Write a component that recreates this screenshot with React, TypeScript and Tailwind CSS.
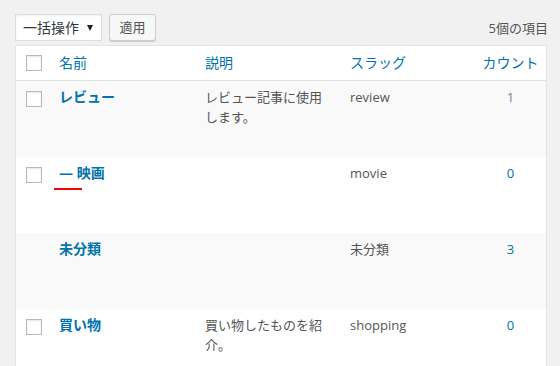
import React from "react";

// --- Types ---
interface Term {
  id: string;
  name: string;
  child?: boolean;
  description: string;
  slug: string;
  count: number;
  checkbox: boolean;
  countColor: string;
}

const terms: Term[] = [
  { id: "1", name: "レビュー", description: "レビュー記事に使用します。", slug: "review", count: 1, checkbox: true, countColor: "text-[#6f79a8]" },
  { id: "2", name: "映画", child: true, description: "", slug: "movie", count: 0, checkbox: true, countColor: "text-[#0073aa]" },
  { id: "3", name: "未分類", description: "", slug: "未分類", count: 3, checkbox: false, countColor: "text-[#0073aa]" },
  { id: "4", name: "買い物", description: "買い物したものを紹介。", slug: "shopping", count: 0, checkbox: true, countColor: "text-[#0073aa]" },
];

const cols = "grid grid-cols-[33px_146px_145px_135px_71px]";

const Checkbox = () => (
  <span className="block h-4 w-4 border border-[#b4b9be] bg-white shadow-[inset_0_1px_2px_rgba(0,0,0,0.1)]" />
);

const TermRow = ({ term, index }: { term: Term; index: number }) => (
  <div className={`${cols} h-[76px] ${index % 2 === 0 ? "bg-[#f9f9f9]" : "bg-white"}`}>
    <div className="pl-[10px] pt-[10px]">{term.checkbox && <Checkbox />}</div>
    <div className="pl-[10px] pt-[6px]">
      <div className="relative text-[14px] font-bold leading-[20px] text-[#0073aa]">
        {term.child && "— "}
        {term.name}
        {/* red annotation under the child marker */}
        {term.child && <span className="absolute left-[-5px] top-[25px] h-[2px] w-[28px] bg-[#ff0000]" />}
      </div>
    </div>
    <div className="px-[10px] pt-[6px] text-[13px] leading-[20px] text-[#555]">{term.description}</div>
    <div className="px-[10px] pt-[6px] text-[13px] leading-[20px] text-[#555]">{term.slug}</div>
    <div className={`pt-[6px] text-center text-[13px] leading-[20px] ${term.countColor}`}>{term.count}</div>
  </div>
);

export default function App() {
  return (
    <div
      className="h-[366px] w-[560px] overflow-hidden bg-[#f1f1f1] pl-[15px] pt-[14px]"
      style={{ fontFamily: '"Open Sans", "Noto Sans CJK JP", sans-serif' }}
    >
      {/* Bulk actions + item count */}
      <div className="flex h-[27px] w-[533px] items-center">
        <div className="flex h-[27px] w-[87px] items-center justify-between border border-[#ddd] bg-white pl-[7px] pr-[8px] shadow-[inset_0_1px_2px_rgba(0,0,0,0.07)]">
          <span className="whitespace-nowrap text-[14px] leading-[20px] text-[#32373c]">一括操作</span>
          <span className="h-0 w-0 border-l-[3px] border-r-[3px] border-t-[6px] border-l-transparent border-r-transparent border-t-[#222]" />
        </div>
        <div className="ml-[7px] flex h-[27px] w-[47px] items-center justify-center rounded-[3px] border border-[#ccc] bg-[#f7f7f7] text-[13px] text-[#555] shadow-[0_1px_0_#ccc]">
          適用
        </div>
        <div className="ml-auto text-[13px] leading-[20px] text-[#555]">5個の項目</div>
      </div>

      {/* Table */}
      <div className="mt-[4px] w-[532px] border border-[#e5e5e5] bg-white shadow-[0_1px_1px_rgba(0,0,0,0.04)]">
        <div className={`${cols} h-[35px] border-b border-[#e1e1e1] bg-white`}>
          <div className="pl-[10px] pt-[9px]">
            <Checkbox />
          </div>
          <div className="pl-[10px] pt-[7px] text-[14px] leading-[20px] text-[#0073aa]">名前</div>
          <div className="pl-[10px] pt-[7px] text-[14px] leading-[20px] text-[#0073aa]">説明</div>
          <div className="pl-[10px] pt-[7px] text-[14px] leading-[20px] text-[#0073aa]">スラッグ</div>
          <div className="pt-[7px] text-center text-[14px] leading-[20px] text-[#0073aa]">カウント</div>
        </div>
        {terms.map((term, index) => (
          <TermRow key={term.id} term={term} index={index} />
        ))}
      </div>
    </div>
  );
}
